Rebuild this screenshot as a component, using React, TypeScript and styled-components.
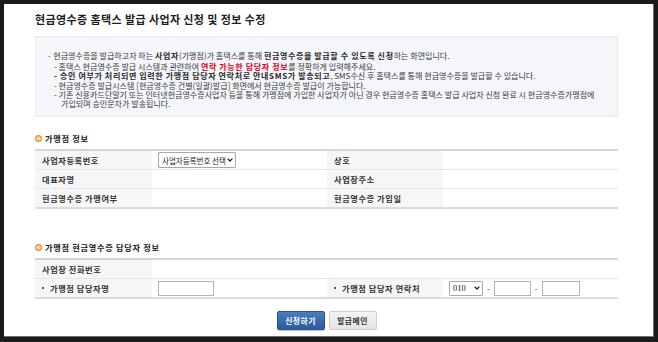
import React from "react";
import styled, { createGlobalStyle } from "styled-components";

const Global = createGlobalStyle`
  html, body { margin: 0; padding: 0; background: #1b1b1b; }
  body { font-family: "Noto Sans CJK KR", "Noto Sans", sans-serif; }
  * { box-sizing: border-box; }
`;

const Frame = styled.div`
  width: 658px;
  height: 342px;
  padding: 4px 4px 5px 4px;
  background: #1b1b1b;
`;

const Panel = styled.main`
  height: 100%;
  background: #fff;
  border-right: 1px solid #707070;
  border-bottom: 1px solid #707070;
  padding: 8px 0 0 31px;
`;

const Title = styled.h1`
  margin: 0;
  font-size: 11px;
  line-height: 14px;
  font-weight: 700;
  letter-spacing: 0.4px;
  color: #1e1e1e;
`;

const InfoBox = styled.section`
  margin-top: 10px;
  width: 583px;
  height: 81px;
  background: #f4f6fa;
  border: 1px solid #e8ecf2;
  padding: 14px 0 0 11px;
  color: #3a3a3a;
  font-size: 8.05px;
`;

const Lead = styled.p`
  margin: 0 0 1px 0;
  line-height: 10px;
  white-space: nowrap;
`;

const SubList = styled.ul`
  margin: 0;
  padding: 0 0 0 7px;
  list-style: none;
`;

const SubLine = styled.li<{ $hang?: boolean }>`
  line-height: 9.3px;
  white-space: nowrap;
  padding-left: ${(p) => (p.$hang ? "7px" : "0")};
`;

const B = styled.b`
  font-weight: 700;
  letter-spacing: 0.6px;
  color: #2a2a2a;
`;

const Red = styled.b`
  font-weight: 700;
  letter-spacing: 0.6px;
  color: #e2001a;
`;

const SectionHead = styled.h2<{ $gap: number }>`
  margin: ${(p) => p.$gap}px 0 0 0;
  height: 12px;
  display: flex;
  align-items: center;
  gap: 3px;
  font-size: 8.2px;
  font-weight: 700;
  letter-spacing: 0.7px;
  color: #222;
`;

const Table = styled.div`
  margin-top: 5px;
  width: 583px;
  display: grid;
  grid-template-columns: 117px 175px 116px 175px;
  border-top: 2px solid #d6d6d6;
  border-bottom: 2px solid #dcdcdc;
`;

const Cell = styled.div<{ $label?: boolean; $span?: number; $top?: boolean }>`
  height: ${(p) => (p.$top ? "19px" : "18px")};
  border-top: ${(p) => (p.$top ? "1px solid #e7e7e7" : "none")};
  grid-column: span ${(p) => p.$span ?? 1};
  display: flex;
  align-items: center;
  gap: 3px;
  background: ${(p) => (p.$label ? "#f6f6f6" : "#fff")};
  padding-left: ${(p) => (p.$label ? "7px" : "6px")};
  font-size: 8.2px;
  font-weight: ${(p) => (p.$label ? 700 : 400)};
  letter-spacing: ${(p) => (p.$label ? "0.6px" : "0")};
  color: #333;
  white-space: nowrap;
`;

const Req = styled.span`
  display: inline-block;
  width: 2px;
  height: 2px;
  background: #d8262b;
  margin-right: 3px;
`;

const SelectWrap = styled.span<{ $w: number; $h: number }>`
  position: relative;
  display: inline-flex;
  width: ${(p) => p.$w}px;
  height: ${(p) => p.$h}px;
`;

const Select = styled.select<{ $num?: boolean }>`
  appearance: none;
  width: 100%;
  height: 100%;
  margin: 0;
  border: 1px solid #a8a8a8;
  border-radius: 1px;
  background: #fff;
  padding: 0 0 0 3px;
  font-family: ${(p) =>
    p.$num ? '"Liberation Serif", serif' : '"Noto Sans CJK KR", sans-serif'};
  font-size: ${(p) => (p.$num ? "8.5px" : "7.5px")};
  letter-spacing: 0;
  color: #222;
  outline: none;
`;

const Chevron = styled.svg`
  position: absolute;
  right: 3px;
  top: 50%;
  transform: translateY(-50%);
  pointer-events: none;
`;

const TextInput = styled.input<{ $w: number }>`
  width: ${(p) => p.$w}px;
  height: 15px;
  margin: 0;
  padding: 0 2px;
  border: 1px solid #b4b4b4;
  background: #fff;
  font-size: 8px;
  outline: none;
`;

const Dash = styled.span`
  font-size: 8px;
  color: #333;
  font-weight: 400;
  padding: 0 1px;
`;

const Buttons = styled.div`
  margin-top: 12px;
  width: 583px;
  display: flex;
  justify-content: center;
  gap: 4px;
`;

const Button = styled.button<{ $primary?: boolean }>`
  width: 48px;
  height: 19px;
  margin: 0;
  padding: 0;
  border-radius: 2px;
  border: 1px solid ${(p) => (p.$primary ? "#2b5190" : "#cfcfcf")};
  background: ${(p) =>
    p.$primary
      ? "linear-gradient(#4a7cc2, #2c5a9d)"
      : "linear-gradient(#f3f3f3, #e4e4e4)"};
  color: ${(p) => (p.$primary ? "#fff" : "#333")};
  font-family: "Noto Sans CJK KR", sans-serif;
  font-size: 7.8px;
  font-weight: 700;
  letter-spacing: 0.5px;
  box-shadow: ${(p) => (p.$primary ? "0 1px 1px rgba(0,0,0,0.25)" : "none")};
`;

const Dot = () => (
  <svg width="7" height="7" viewBox="0 0 7 7">
    <circle cx="3.5" cy="3.5" r="3.5" fill="#f39323" />
    <circle cx="3.5" cy="3.5" r="2.1" fill="#fff" />
    <path d="M2.9 2.2 L4.3 3.5 L2.9 4.8" stroke="#f39323" strokeWidth="1" fill="none" />
  </svg>
);

const ChevronIcon = () => (
  <Chevron width="6" height="4" viewBox="0 0 6 4">
    <path d="M0.6 0.6 L3 3 L5.4 0.6" stroke="#222" strokeWidth="1.3" fill="none" />
  </Chevron>
);

export default function App() {
  return (
    <>
      <Global />
      <Frame>
        <Panel>
          <Title>현금영수증 홈택스 발급 사업자 신청 및 정보 수정</Title>

          <InfoBox>
            <Lead>
              · 현금영수증을 발급하고자 하는 <B>사업자</B>(가맹점)가 홈택스를 통해{" "}
              <B>현금영수증을 발급할 수 있도록 신청</B>하는 화면입니다.
            </Lead>
            <SubList>
              <SubLine>
                - 홈택스 현금영수증 발급 시스템과 관련하여 <Red>연락 가능한 담당자 정보</Red>를
                정확하게 입력해주세요.
              </SubLine>
              <SubLine>
                <B>- 승인 여부가 처리되면 입력한 가맹점 담당자 연락처로 안내SMS가 발송되고</B>,
                SMS수신 후 홈택스를 통해 현금영수증을 발급할 수 있습니다.
              </SubLine>
              <SubLine>
                - 현금영수증 발급시스템 [현금영수증 건별(일괄)발급] 화면에서 현금영수증 발급이
                가능합니다.
              </SubLine>
              <SubLine>
                - 기존 신용카드단말기 또는 인터넷현금영수증사업자 등을 통해 가맹점에 가입한
                사업자가 아닌 경우 현금영수증 홈택스 발급 사업자 신청 완료 시 현금영수증가맹점에
              </SubLine>
              <SubLine $hang>가입되며 승인문자가 발송됩니다.</SubLine>
            </SubList>
          </InfoBox>

          <SectionHead $gap={15}>
            <Dot />
            가맹점 정보
          </SectionHead>
          <Table>
            <Cell $label>사업자등록번호</Cell>
            <Cell>
              <SelectWrap $w={78} $h={16}>
                <Select defaultValue="sel">
                  <option value="sel">사업자등록번호 선택</option>
                </Select>
                <ChevronIcon />
              </SelectWrap>
            </Cell>
            <Cell $label>상호</Cell>
            <Cell />
            <Cell $label $top>
              대표자명
            </Cell>
            <Cell $top />
            <Cell $label $top>
              사업장주소
            </Cell>
            <Cell $top />
            <Cell $label $top>
              현금영수증 가맹여부
            </Cell>
            <Cell $top />
            <Cell $label $top>
              현금영수증 가입일
            </Cell>
            <Cell $top />
          </Table>

          <SectionHead $gap={32}>
            <Dot />
            가맹점 현금영수증 담당자 정보
          </SectionHead>
          <Table>
            <Cell $label>사업장 전화번호</Cell>
            <Cell $span={3} />
            <Cell $label $top>
              <Req />
              가맹점 담당자명
            </Cell>
            <Cell $top>
              <TextInput $w={56} />
            </Cell>
            <Cell $label $top>
              <Req />
              가맹점 담당자 연락처
            </Cell>
            <Cell $top>
              <SelectWrap $w={34} $h={15}>
                <Select $num defaultValue="010">
                  <option value="010">010</option>
                </Select>
                <ChevronIcon />
              </SelectWrap>
              <Dash>-</Dash>
              <TextInput $w={37} />
              <Dash>-</Dash>
              <TextInput $w={38} />
            </Cell>
          </Table>

          <Buttons>
            <Button $primary>신청하기</Button>
            <Button>발급메인</Button>
          </Buttons>
        </Panel>
      </Frame>
    </>
  );
}
